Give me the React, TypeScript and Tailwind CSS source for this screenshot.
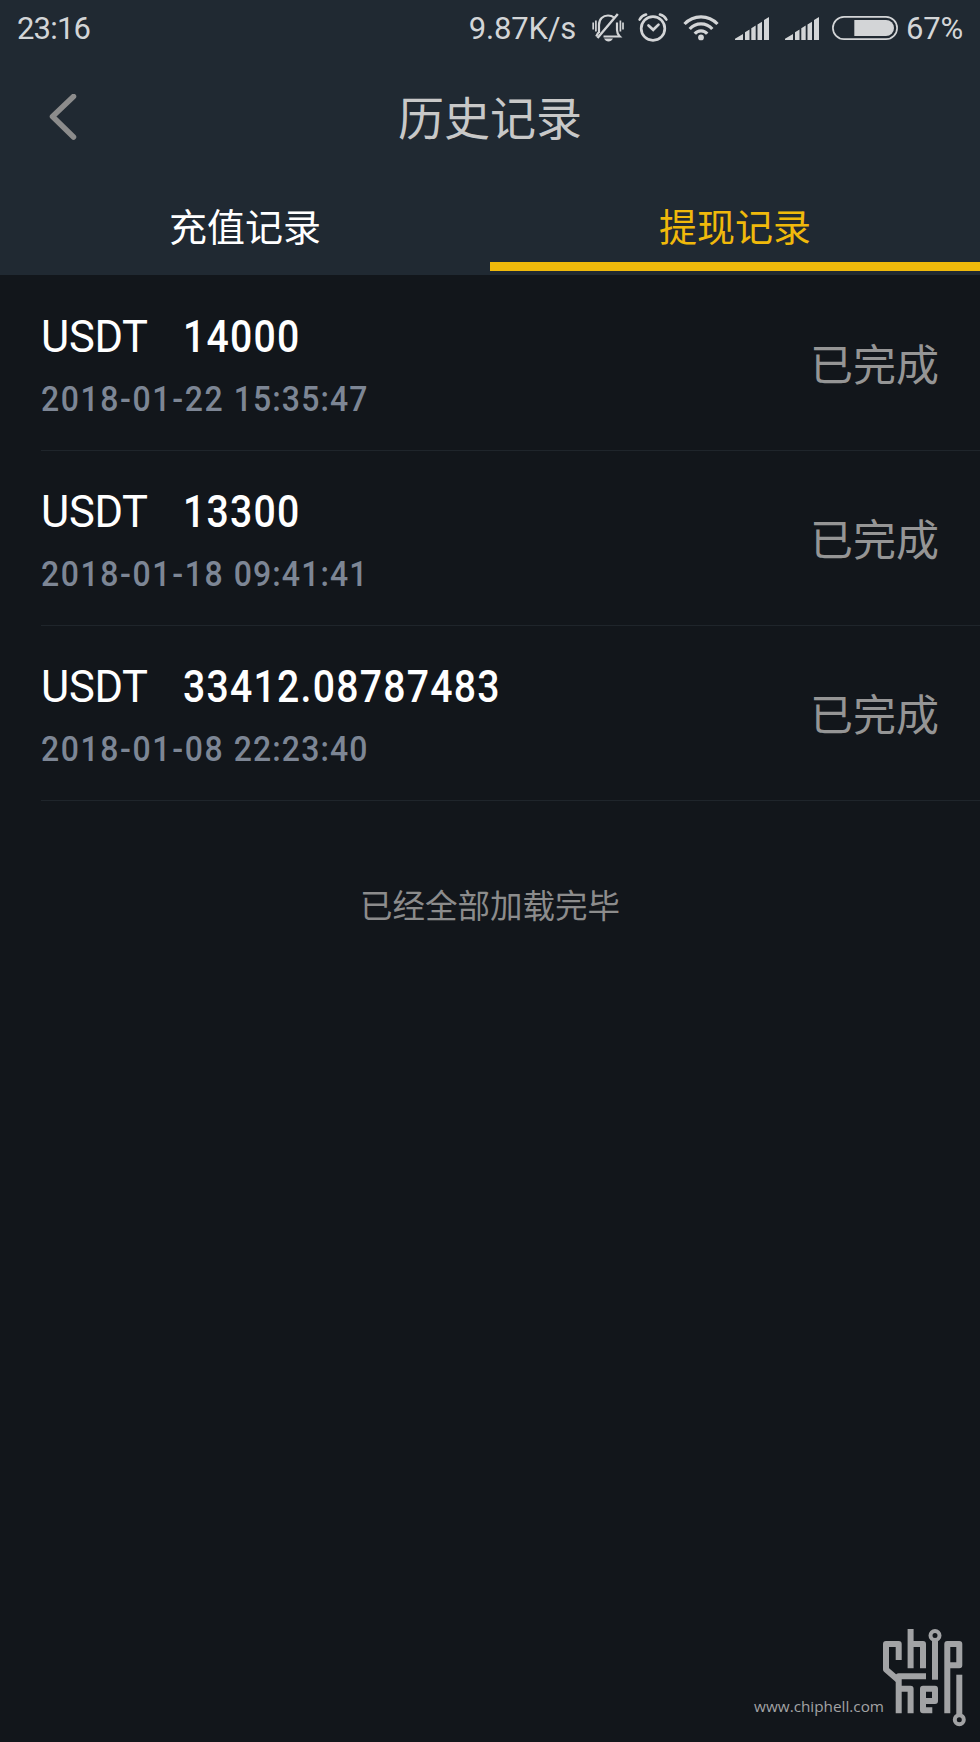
import React from 'react';

type Entry = { coin: string; amount: string; date: string; time: string; status: string };

const entries: Entry[] = [
  { coin: 'USDT', amount: '14000', date: '2018-01-22', time: '15:35:47', status: '已完成' },
  { coin: 'USDT', amount: '13300', date: '2018-01-18', time: '09:41:41', status: '已完成' },
  { coin: 'USDT', amount: '33412.08787483', date: '2018-01-08', time: '22:23:40', status: '已完成' },
];

function MutedBell() {
  return (
    <svg className="h-[30px] w-8" viewBox="0 0 32 30" fill="none" stroke="currentColor" strokeWidth="2.200">
      <path d="M7 20V12C7 6 11 2.500 16 2.500c2.300 0 4.500.700 6 2M25 9.500V17c0 2.500.800 4.500 2.800 6.500H11.500" />
      <path d="M6.300 19.500L4.200 23.500" />
      <path d="M25.800 1L5.500 25" strokeWidth="2.400" />
      <path d="M12 25.600h9c-1 1.900-2.700 2.900-4.500 2.900s-3.500-1-4.500-2.900z" fill="currentColor" stroke="none" />
      <path d="M1.200 9.500v7M3.900 7.500v11M28.400 7.500v11M31 9.500v7" strokeWidth="1.700" />
    </svg>
  );
}

function AlarmClock() {
  return (
    <svg className="h-[30px] w-[30px]" viewBox="0 0 30 30" fill="none" stroke="currentColor" strokeWidth="2.700" strokeLinecap="round">
      <circle cx="15" cy="15.500" r="11.800" />
      <path d="M10.500 12.500l4.700 4.300 5.300-5.200" />
      <path d="M1.700 6.500C3 4 5.200 2.100 8 1.500M28.300 6.500C27 4 24.800 2.100 22 1.500" />
    </svg>
  );
}

function Wifi() {
  return (
    <svg className="h-[27px] w-9" viewBox="0 0 36 27" fill="none" stroke="currentColor" strokeWidth="3.200">
      <path d="M1.500 9C10.500-.600 25.500-.600 34.500 9" />
      <path d="M6.700 14C12.700 7.100 23.300 7.100 29.300 14" />
      <path d="M11.800 18.800C15 14.900 21 14.900 24.200 18.800" />
      <circle cx="18" cy="22.400" r="2.900" fill="currentColor" stroke="none" />
    </svg>
  );
}

function Signal() {
  return (
    <svg className="h-[23px] w-[34px]" viewBox="0 0 34 23" fill="currentColor">
      <path d="M0 23v-1.200L8 17v6zM10 23v-7.800l4.500-2.700V23zM16.300 23V11.200l4.400-2.600V23zM22.500 23V7.400l4.500-2.700V23zM29 23V3l5-3v23z" />
    </svg>
  );
}

function Battery() {
  return (
    <svg className="h-6 w-[66px]" viewBox="0 0 66 24" fill="none" stroke="currentColor" strokeWidth="1.700">
      <rect x=".9" y=".9" width="64.200" height="22.200" rx="11.100" />
      <path d="M22.300 4H54a8 8 0 0 1 0 16H22.300z" fill="currentColor" stroke="none" />
    </svg>
  );
}

function StatusBar() {
  return (
    <div className="flex h-14 items-center text-[#d3d5d7]">
      <span className="ml-[17px] text-[31px] leading-none tracking-[-0.8px]">23:16</span>
      <span className="ml-auto text-[31px] leading-none tracking-[-0.2px]">9.87K/s</span>
      <span className="ml-4"><MutedBell /></span>
      <span className="ml-[14px]"><AlarmClock /></span>
      <span className="ml-[15px]"><Wifi /></span>
      <span className="ml-4"><Signal /></span>
      <span className="ml-4"><Signal /></span>
      <span className="ml-[13px]"><Battery /></span>
      <span className="mr-[17px] ml-2 text-[31px] leading-none tracking-[-0.2px]">67%</span>
    </div>
  );
}

function Row({ entry }: { entry: Entry }) {
  return (
    <li className="ml-[41px] flex h-[175px] items-start justify-between border-b border-[#1f252b] pr-[41px]">
      <div className="pt-9">
        <div className="flex h-[52px] items-center text-[43.500px] leading-none text-white">
          <span className="w-[142px] tracking-[-0.3px]">{entry.coin}</span>
          <span className="origin-left scale-x-90 font-medium tracking-[1.400px]">{entry.amount}</span>
        </div>
        <div className="mt-[13px] flex h-[46px] origin-left scale-x-90 items-center text-[35.500px] leading-none font-medium whitespace-pre text-[#7d8695]">
          <span className="tracking-[1.800px]">{entry.date} </span>
          <span className="tracking-[1.250px]">{entry.time}</span>
        </div>
      </div>
      <span className="mt-[60px] text-[43px] leading-[60px] text-[#959595]">{entry.status}</span>
    </li>
  );
}

function Brand() {
  return (
    <div className="mt-auto mr-[14px] mb-[15px] flex items-end justify-end text-[#a2a3a5]">
      <span className="-mr-0.5 mb-[10px] font-['Open_Sans'] text-[15.300px] leading-[22px]">www.chiphell.com</span>
      <svg className="h-[98px] w-[84px]" viewBox="0 0 84 98" fill="none" stroke="currentColor" strokeWidth="6" strokeLinejoin="round">
        <path d="M16.700 31V15H4v25.500l12.700 11" />
        <path d="M28.600 0v39.300M28.600 15H41v24.300" />
        <path d="M53 11v39.700" />
        <circle cx="53" cy="6.500" r="4.500" strokeWidth="4" />
        <path d="M65.300 84.300V15h12v21.300h-12" />
        <path d="M44 47.300H16.700v37M16.700 59.700h11.900v24.600" />
        <path d="M50.300 81.300H41V59.700h12V72H41" />
        <path d="M77.300 45.700v40" />
        <circle cx="77.300" cy="90.700" r="4.500" strokeWidth="4" />
      </svg>
    </div>
  );
}

export default function App() {
  return (
    <div className="flex h-[1742px] w-[980px] flex-col bg-[#12161b] font-[Roboto,'Noto_Sans_CJK_SC',sans-serif]">
      <header className="flex h-[275px] shrink-0 flex-col bg-[#202932]">
        <StatusBar />
        <div className="flex h-[121px] items-center justify-between px-[49px]">
          <svg className="h-[46px] w-7" viewBox="0 0 28 46" fill="none" stroke="#8c8c8c" strokeWidth="5.500" strokeLinecap="round" strokeLinejoin="round">
            <path d="M24.500 2.500L3.500 22.500l21 20.500" />
          </svg>
          <h1 className="pt-1 text-[46px] leading-[60px] text-[#c8c8c8]">历史记录</h1>
          <div className="w-7" />
        </div>
        <nav className="grid h-[94px] grid-cols-2 text-[38px] leading-[50px]">
          <button className="border-b-[9px] border-transparent pt-[17px] text-white">充值记录</button>
          <button className="border-b-[9px] border-[#f0b90b] pt-[17px] text-[#f0b90b]">提现记录</button>
        </nav>
      </header>
      <ul className="pt-px">
        {entries.map((entry) => <Row key={entry.date} entry={entry} />)}
      </ul>
      <p className="mt-[81px] text-center text-[32.500px] leading-[50px] text-[#8c8c8c]">已经全部加载完毕</p>
      <Brand />
    </div>
  );
}
